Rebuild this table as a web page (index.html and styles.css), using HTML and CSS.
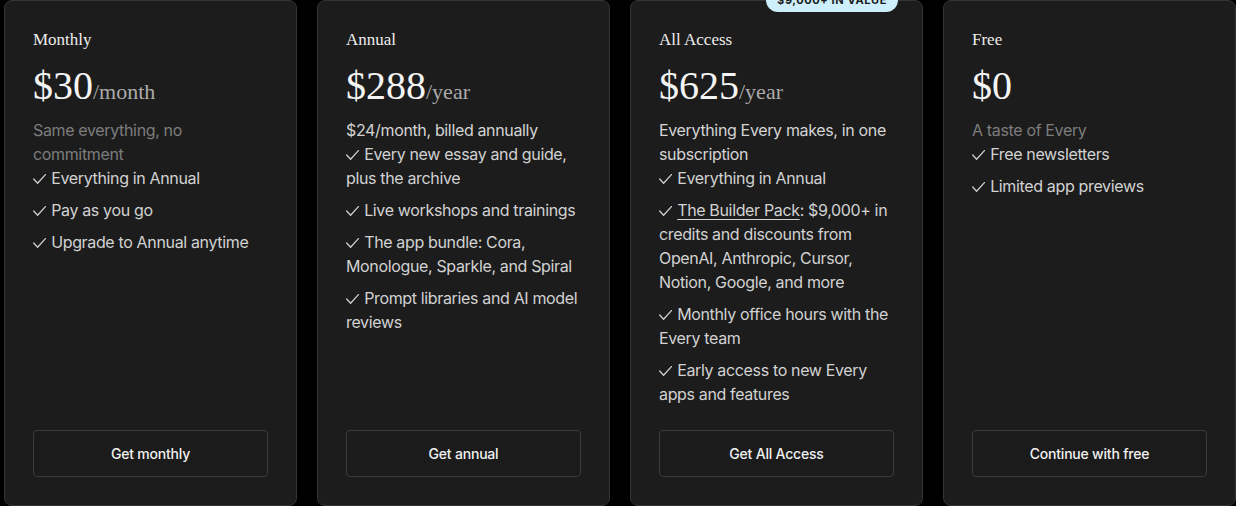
FILE: index.html
```html
<!DOCTYPE html>
<html lang="en">
<head>
<meta charset="utf-8">
<title>Plans</title>
<link rel="stylesheet" href="styles.css">
</head>
<body>
<div class="plans">
  <div class="card">
    <div class="plan-name">Monthly</div>
    <div class="price"><span class="amount">$30</span><span class="period">/month</span></div>
    <p class="sub muted">Same everything, no commitment</p>
    <ul class="features">
      <li><svg class="check" viewBox="0 0 13 10"><polyline points="0.7,5 4.6,9.2 12.4,0.6"/></svg> Everything in Annual</li>
      <li><svg class="check" viewBox="0 0 13 10"><polyline points="0.7,5 4.6,9.2 12.4,0.6"/></svg> Pay as you go</li>
      <li><svg class="check" viewBox="0 0 13 10"><polyline points="0.7,5 4.6,9.2 12.4,0.6"/></svg> Upgrade to Annual anytime</li>
    </ul>
    <button class="cta">Get monthly</button>
  </div>
  <div class="card">
    <div class="plan-name">Annual</div>
    <div class="price"><span class="amount">$288</span><span class="period">/year</span></div>
    <p class="sub">$24/month, billed annually</p>
    <ul class="features">
      <li><svg class="check" viewBox="0 0 13 10"><polyline points="0.7,5 4.6,9.2 12.4,0.6"/></svg> Every new essay and guide, plus the archive</li>
      <li><svg class="check" viewBox="0 0 13 10"><polyline points="0.7,5 4.6,9.2 12.4,0.6"/></svg> Live workshops and trainings</li>
      <li><svg class="check" viewBox="0 0 13 10"><polyline points="0.7,5 4.6,9.2 12.4,0.6"/></svg> The app bundle: Cora, Monologue, Sparkle, and Spiral</li>
      <li><svg class="check" viewBox="0 0 13 10"><polyline points="0.7,5 4.6,9.2 12.4,0.6"/></svg> Prompt libraries and AI model reviews</li>
    </ul>
    <button class="cta">Get annual</button>
  </div>
  <div class="card">
    <span class="badge">$9,000+ in value</span>
    <div class="plan-name">All Access</div>
    <div class="price"><span class="amount">$625</span><span class="period">/year</span></div>
    <p class="sub">Everything Every makes, in one subscription</p>
    <ul class="features">
      <li><svg class="check" viewBox="0 0 13 10"><polyline points="0.7,5 4.6,9.2 12.4,0.6"/></svg> Everything in Annual</li>
      <li><svg class="check" viewBox="0 0 13 10"><polyline points="0.7,5 4.6,9.2 12.4,0.6"/></svg> <a class="link" href="#">The Builder Pack</a>: $9,000+ in credits and discounts from OpenAI, Anthropic, Cursor, Notion, Google, and more</li>
      <li><svg class="check" viewBox="0 0 13 10"><polyline points="0.7,5 4.6,9.2 12.4,0.6"/></svg> Monthly office hours with the Every team</li>
      <li><svg class="check" viewBox="0 0 13 10"><polyline points="0.7,5 4.6,9.2 12.4,0.6"/></svg> Early access to new Every apps and features</li>
    </ul>
    <button class="cta">Get All Access</button>
  </div>
  <div class="card">
    <div class="plan-name">Free</div>
    <div class="price"><span class="amount">$0</span></div>
    <p class="sub muted">A taste of Every</p>
    <ul class="features">
      <li><svg class="check" viewBox="0 0 13 10"><polyline points="0.7,5 4.6,9.2 12.4,0.6"/></svg> Free newsletters</li>
      <li><svg class="check" viewBox="0 0 13 10"><polyline points="0.7,5 4.6,9.2 12.4,0.6"/></svg> Limited app previews</li>
    </ul>
    <button class="cta">Continue with free</button>
  </div>
</div>
</body>
</html>
```

FILE: styles.css
```css
html, body {
  margin: 0;
  padding: 0;
  background: #000;
}
body {
  font-family: Inter, "Liberation Sans", sans-serif;
  color: #d2d2d2;
  overflow: hidden;
}
.plans {
  display: grid;
  grid-template-columns: repeat(4, 293px);
  gap: 20px;
  padding-left: 4px;
  height: 506px;
}
.card {
  position: relative;
  display: flex;
  flex-direction: column;
  background: #1c1c1c;
  border: 1px solid #343434;
  border-radius: 8px;
  padding: 27px 28px 28px 28px;
  box-sizing: border-box;
  height: 506px;
}
.plan-name {
  font-family: "Liberation Serif", serif;
  font-size: 17px;
  line-height: 24px;
  color: #ececec;
}
.price {
  display: flex;
  align-items: baseline;
  margin-top: 10px;
  margin-bottom: 8px;
  height: 48px;
  font-family: "Liberation Serif", serif;
}
.amount {
  font-size: 40px;
  line-height: 48px;
  color: #f4f4f4;
}
.period {
  font-size: 22px;
  color: #ababab;
}
.sub {
  margin: 0;
  font-size: 16px;
  line-height: 24px;
  letter-spacing: -0.35px;
  color: #d4d4d4;
}
.sub.muted {
  color: #7d7d7d;
}
.features {
  list-style: none;
  margin: 0;
  padding: 0;
  display: flex;
  flex-direction: column;
  gap: 8px;
}
.features li {
  font-size: 16px;
  line-height: 24px;
  letter-spacing: -0.35px;
  color: #d2d2d2;
}
.check {
  display: inline-block;
  width: 13px;
  height: 10px;
  margin-right: 1px;
  vertical-align: 0;
  fill: none;
  stroke: #cfcfcf;
  stroke-width: 1.3;
  stroke-linecap: round;
  stroke-linejoin: round;
}
.link {
  color: #d2d2d2;
  text-decoration: underline;
  text-underline-offset: 3px;
  text-decoration-thickness: 1px;
}
.cta {
  margin-top: auto;
  height: 47px;
  width: 100%;
  background: #1b1b1b;
  border: 1px solid #3b3b3b;
  border-radius: 4px;
  color: #f0f0f0;
  font-family: Inter, "Liberation Sans", sans-serif;
  font-size: 14px;
  font-weight: 500;
  letter-spacing: -0.2px;
}
.badge {
  position: absolute;
  top: -13px;
  right: 24px;
  height: 24px;
  padding: 0 11px;
  border-radius: 12px;
  background: #cdeefb;
  color: #1a1a1a;
  font-family: Inter, "Liberation Sans", sans-serif;
  font-size: 11px;
  font-weight: 700;
  letter-spacing: 0.6px;
  line-height: 24px;
  text-transform: uppercase;
}
```
